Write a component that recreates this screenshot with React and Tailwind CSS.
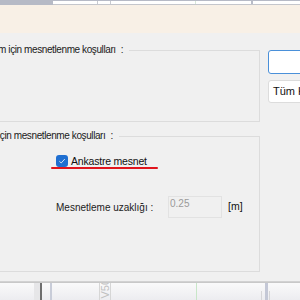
import React from 'react';

const font = { fontFamily: '"Segoe UI", "Liberation Sans", Arial, sans-serif' };

const GroupBox = ({ legend, className, children }) => (
  <div className={`relative border border-[#dcdcdc] ${className}`}>
    <span className="absolute -top-[8px] left-0 bg-[#f0f0f0] pr-[6px] text-[10px] leading-[14px] tracking-[-0.4px] text-[#1a1a1a] whitespace-nowrap">
      {legend}
      <span className="ml-[5px]">:</span>
    </span>
    {children}
  </div>
);

const App = () => {
  return (
    <div className="w-[300px] h-[300px] overflow-hidden bg-[#f0f0f0] flex flex-col" style={font}>
      {/* top toolbar strip */}
      <div className="h-[5px] bg-[#b6bac6] flex">
        <div className="w-[53px]" />
        <div className="flex-1 flex h-[4px] mt-[1px] bg-white border-b border-[#c4c6cc]">
          <div className="w-[45px] border-r border-[#c8cad0]" />
          <div className="w-[13px] border-r border-[#c8cad0]" />
          <div className="w-[85px] border-r border-[#d8e8d8]" />
          <div className="w-[57px] border-r-2 border-[#b8bcc8]" />
          <div className="flex-1" />
        </div>
      </div>
      {/* beige info band */}
      <div className="h-[28px] bg-[#f8f0e6]" />

      {/* dialog body */}
      <div className="h-[249px] flex pt-[17px] border-b border-[#d2d2d2]">
        <div className="w-[262px] flex flex-col">
          <GroupBox legend="m için mesnetlenme koşulları" className="h-[72px] w-[262px] -ml-[2px] border-l-0">
          </GroupBox>
          <GroupBox legend="için mesnetlenme koşulları" className="mt-[14px] h-[136px] w-[262px] -ml-[2px] border-l-0">
            <div className="absolute left-[58px] top-[17px] flex items-center gap-[3px]">
              <span className="w-[12px] h-[12px] rounded-[3px] bg-[#1f6fd1] flex items-center justify-center">
                <svg width="8" height="8" viewBox="0 0 8 8">
                  <path d="M1.3 4.2 L3.2 6 L6.8 2" fill="none" stroke="#cfe0f5" strokeWidth="1" />
                </svg>
              </span>
              <span className="text-[10.5px] leading-[14px] tracking-[-0.2px] text-[#111]">Ankastre mesnet</span>
            </div>
            <div className="absolute left-[53px] top-[30px] w-[107px] h-[2px] rounded-full bg-[#e0151d]" />
            <div className="absolute left-[58px] top-[59px] flex items-center">
              <span className="text-[10px] text-[#222] w-[112px]">Mesnetleme uzaklığı :</span>
              <div className="w-[54px] h-[22px] border border-[#e2e2e2] text-[10px] text-[#9a9a9a] pl-[1px] leading-[14px]">0.25</div>
              <span className="ml-[6px] text-[10.5px] text-[#111]">[m]</span>
            </div>
          </GroupBox>
        </div>
        <div className="flex-1 pl-[8px] flex flex-col gap-[6px]">
          <div className="h-[24px] -mr-[10px] rounded-[3px] border border-[#4a90d9] bg-white" />
          <div className="h-[23px] -mr-[10px] rounded-[3px] border border-[#dcdcdc] bg-white text-[11px] leading-[20px] pl-[4px] text-[#111] whitespace-nowrap">
            Tüm Kat
          </div>
        </div>
      </div>

      {/* underlying drawing area */}
      <div className="flex-1 relative bg-gradient-to-b from-[#fafafa] to-[#ececf0] border-t border-[#c8c8c8]">
        <div className="absolute left-[34px] top-0 bottom-0 w-[6px] bg-[#e6e6e8]" />
        <div className="absolute left-[40px] top-0 bottom-0 w-[2px] bg-[#6e6e6e]" />
        <div className="absolute left-[50px] top-0 bottom-0 w-[2px] bg-[#c8ccd8]" />
        <div className="absolute left-[99px] top-0 bottom-0 w-[12px] border-x border-[#d6d6d6] overflow-hidden">
          <span className="block text-[11px] leading-[11px] text-[#c0c0c0] -rotate-90 translate-y-[5px]">V50</span>
        </div>
        <div className="absolute left-[196px] top-0 bottom-0 w-px bg-[#c8e6c8]" />
        <div className="absolute left-[265px] top-0 bottom-0 w-[3px] bg-[#c4c8d6]" />
        <div className="absolute left-[261px] top-[8px] bottom-0 w-px bg-[#d6d6d8]" />
        <div className="absolute left-[269px] top-[8px] bottom-0 w-px bg-[#d6d6d8]" />
      </div>
    </div>
  );
};

export default App;
